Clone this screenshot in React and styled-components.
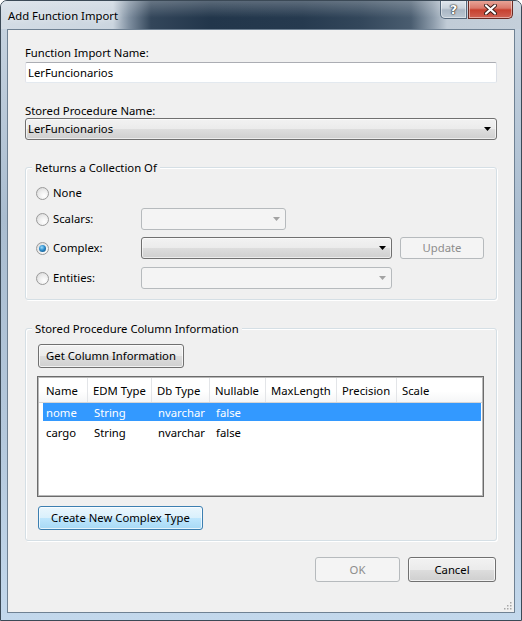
import React from "react";
import styled, { createGlobalStyle } from "styled-components";

const GlobalStyle = createGlobalStyle`
  html, body { margin: 0; padding: 0; background: #fff; }
  body {
    font-family: "Noto Sans", "Segoe UI", sans-serif;
    font-size: 11.3px;
    color: #000;
  }
`;

const Window = styled.div`
  width: 522px;
  height: 621px;
  box-sizing: border-box;
  border: 1px solid #3b4956;
  border-radius: 7px 7px 0 0;
  background: linear-gradient(180deg, #c9d5e1 0%, #aabdd0 35%, #b4c8dc 70%, #c3d8ec 100%);
  display: flex;
  flex-direction: column;
  overflow: hidden;
`;

const TitleBar = styled.div`
  height: 28px;
  flex: none;
  display: flex;
  justify-content: space-between;
  align-items: flex-start;
  padding: 0 8px 0 7px;
  background:
    linear-gradient(180deg, rgba(255, 255, 255, 0.25) 0%, rgba(255, 255, 255, 0) 60%),
    linear-gradient(90deg, #d3dce5 0px, #cbd5df 112px, #7f8fa0 128px, #33465a 150px, #22364b 210px,
      #263a4f 300px, #33475b 360px, #4a5d70 410px, #8d9cab 432px, #c1ccd7 446px, #c4cfda 100%);
`;

const Title = styled.span`
  line-height: 16px;
  margin-top: 7px;
  color: #000;
  text-shadow: 0 0 6px rgba(255, 255, 255, 0.9);
`;

const CaptionButtons = styled.div`
  display: flex;
  gap: 1px;
  margin-top: -1px;
`;

const CaptionButton = styled.div`
  height: 19px;
  width: ${(p) => (p.$close ? "45px" : "27px")};
  box-sizing: border-box;
  border: 1px solid ${(p) => (p.$close ? "#6b2a22" : "#55687b")};
  border-top: none;
  border-radius: ${(p) => (p.$close ? "0 0 5px 0" : "0 0 0 5px")};
  background: ${(p) =>
    p.$close
      ? "linear-gradient(180deg, #e9a99c 0%, #d9796b 45%, #c7402f 55%, #d06253 100%)"
      : "linear-gradient(180deg, #e3e9ef 0%, #c9d3dc 45%, #aab7c4 55%, #bcc8d3 100%)"};
  box-shadow: inset 0 0 0 1px rgba(255, 255, 255, 0.45);
  display: flex;
  align-items: center;
  justify-content: center;
`;

const HelpGlyph = styled.span`
  font-family: "DejaVu Sans", sans-serif;
  font-weight: bold;
  font-size: 13px;
  line-height: 13px;
  color: #fff;
  text-shadow: 0 0 1px #222, 0 0 1px #222, 0 0 2px #333;
`;

const Client = styled.div`
  position: relative;
  flex: none;
  margin: 0 6px;
  height: 584px;
  box-sizing: border-box;
  border: 1px solid #6f8193;
  background: #f0f0f0;
  padding: 14px 17px 0;
  display: flex;
  flex-direction: column;
`;

const FieldLabel = styled.div`
  line-height: 16px;
  height: 16px;
  padding-top: 1px;
  box-sizing: border-box;
  margin-top: ${(p) => p.$top || 0}px;
`;

const TextBox = styled.input`
  display: block;
  box-sizing: border-box;
  width: 100%;
  height: 21px;
  margin: 2px 0 0;
  padding: 0 2px;
  font: inherit;
  color: #000;
  background: #fff;
  border: 1px solid;
  border-color: #abadb3 #dbdfe6 #e3e9ef #e2e3ea;
  border-radius: 2px;
  outline: none;
`;

const Combo = styled.div`
  box-sizing: border-box;
  height: 22px;
  width: ${(p) => (p.$width ? `${p.$width}px` : "100%")};
  flex: none;
  border: 1px solid ${(p) => (p.$disabled ? "#b6babd" : "#707070")};
  border-radius: 3px;
  background: ${(p) =>
    p.$disabled
      ? "#f4f4f4"
      : "linear-gradient(180deg, #f2f2f2 0%, #ebebeb 50%, #dddddd 51%, #cfcfcf 100%)"};
  box-shadow: ${(p) => (p.$disabled ? "none" : "inset 0 0 0 1px rgba(255,255,255,0.6)")};
  display: flex;
  align-items: center;
  justify-content: space-between;
  padding: 0 5px 0 2px;
  line-height: 16px;
`;

const Arrow = ({ color }) => (
  <svg width="7" height="4" viewBox="0 0 7 4">
    <polygon points="0,0 7,0 3.5,4" fill={color} />
  </svg>
);

const GroupBox = styled.div`
  position: relative;
  box-sizing: border-box;
  margin-top: ${(p) => p.$top}px;
  border: 1px solid #d5dfe5;
  border-radius: 3px;
  box-shadow: inset 1px 1px 0 #fff, 1px 1px 0 #fff;
  padding: ${(p) => p.$pad};
  display: flex;
  flex-direction: column;
  align-items: flex-start;
`;

const Legend = styled.span`
  position: absolute;
  top: -8px;
  left: 6px;
  padding: 0 3px;
  line-height: 16px;
  background: #f0f0f0;
`;

const OptionRow = styled.div`
  display: flex;
  align-items: center;
  height: 22px;
  margin-top: ${(p) => p.$top || 0}px;
`;

const OptionLabel = styled.label`
  width: 105px;
  flex: none;
  display: flex;
  align-items: center;
  gap: 4px;
  line-height: 16px;
`;

const Radio = styled.span`
  width: 13px;
  height: 13px;
  box-sizing: border-box;
  border-radius: 50%;
  border: 1px solid #9a9a9a;
  background: radial-gradient(circle at 65% 70%, #ffffff 0%, #efefef 45%, #d3d3d3 100%);
  display: flex;
  align-items: center;
  justify-content: center;

  &::after {
    content: "";
    display: ${(p) => (p.$checked ? "block" : "none")};
    width: 7px;
    height: 7px;
    border-radius: 50%;
    background: radial-gradient(circle at 40% 35%, #9ddcf9 0%, #2d8ccc 45%, #0d456f 100%);
  }
`;

const Button = styled.div`
  box-sizing: border-box;
  height: ${(p) => p.$height || 24}px;
  width: ${(p) => p.$width}px;
  flex: none;
  margin-top: ${(p) => p.$top || 0}px;
  margin-left: ${(p) => p.$left || 0}px;
  border: 1px solid ${(p) => (p.$disabled ? "#b6babd" : p.$hot ? "#3c7fb1" : "#707070")};
  border-radius: 3px;
  background: ${(p) =>
    p.$disabled
      ? "#f4f4f4"
      : p.$hot
      ? "linear-gradient(180deg, #eaf6fd 0%, #d9f0fc 50%, #bee6fd 51%, #a7d9f5 100%)"
      : "linear-gradient(180deg, #f2f2f2 0%, #ebebeb 50%, #dddddd 51%, #cfcfcf 100%)"};
  box-shadow: ${(p) => (p.$disabled ? "none" : "inset 0 0 0 1px rgba(255,255,255,0.7)")};
  color: ${(p) => (p.$disabled ? "#8d8d8d" : "#000")};
  display: flex;
  align-items: center;
  justify-content: center;
  line-height: 16px;
`;

const ListView = styled.div`
  box-sizing: border-box;
  width: 447px;
  height: 121px;
  margin-top: 8px;
  border: 1px solid #6b6b6b;
  padding: 1px;
  background: #fff;
  box-shadow: inset 0 0 0 1px #b8b8b8;
`;

const headerCols = "49px 64px 58px 56px 71px 60px 50px 1fr";
const rowCols = "45px 64px 58px 56px 71px 60px 50px 1fr";

const HeaderRow = styled.div`
  display: grid;
  grid-template-columns: ${headerCols};
  height: 24px;
  border-bottom: 1px solid #d5d5d5;
  background: linear-gradient(180deg, #ffffff 0%, #ffffff 55%, #f5f6f7 100%);
`;

const HeaderCell = styled.div`
  display: flex;
  align-items: center;
  padding: 1px 0 0 5px;
  border-right: 1px solid ${(p) => (p.$last ? "transparent" : "#e3e5e8")};
  line-height: 16px;
  white-space: nowrap;
  &:first-child { padding-left: 7px; }
`;

const DataRow = styled.div`
  display: grid;
  grid-template-columns: ${rowCols};
  height: 18px;
  margin: 0 1px 2px 4px;
  background: ${(p) => (p.$selected ? "#3399ff" : "transparent")};
  color: ${(p) => (p.$selected ? "#fff" : "#000")};
`;

const DataCell = styled.div`
  display: flex;
  align-items: center;
  padding: 1px 0 0 6px;
  line-height: 16px;
  white-space: nowrap;
  &:first-child { padding-left: 3px; }
`;

const Footer = styled.div`
  display: flex;
  justify-content: flex-end;
  gap: 8px;
  margin-top: 16px;
  padding-right: 1px;
`;

const Grip = styled.svg`
  position: absolute;
  right: 2px;
  bottom: 2px;
`;

const columns = ["Name", "EDM Type", "Db Type", "Nullable", "MaxLength", "Precision", "Scale"];
const rows = [
  { name: "nome", edm: "String", db: "nvarchar", nullable: "false", selected: true },
  { name: "cargo", edm: "String", db: "nvarchar", nullable: "false" },
];

export default function App() {
  return (
    <>
      <GlobalStyle />
      <Window>
        <TitleBar>
          <Title>Add Function Import</Title>
          <CaptionButtons>
            <CaptionButton>
              <HelpGlyph>?</HelpGlyph>
            </CaptionButton>
            <CaptionButton $close>
              <svg width="13" height="11" viewBox="0 0 13 11">
                <path d="M2 1.5 L11 9.5 M11 1.5 L2 9.5" stroke="#3a1d18" strokeWidth="4" strokeLinecap="round" />
                <path d="M2 1.5 L11 9.5 M11 1.5 L2 9.5" stroke="#fff" strokeWidth="2.2" strokeLinecap="round" />
              </svg>
            </CaptionButton>
          </CaptionButtons>
        </TitleBar>

        <Client>
          <FieldLabel>Function Import Name:</FieldLabel>
          <TextBox readOnly defaultValue="LerFuncionarios" />

          <FieldLabel $top={19}>Stored Procedure Name:</FieldLabel>
          <Combo>
            <span>LerFuncionarios</span>
            <Arrow color="#000" />
          </Combo>

          <GroupBox $top={27} $pad="14px 10px 10px">
            <Legend>Returns a Collection Of</Legend>
            <OptionRow>
              <OptionLabel>
                <Radio />
                None
              </OptionLabel>
            </OptionRow>
            <OptionRow $top={4}>
              <OptionLabel>
                <Radio />
                Scalars:
              </OptionLabel>
              <Combo $disabled $width={145}>
                <span />
                <Arrow color="#a3a3a3" />
              </Combo>
            </OptionRow>
            <OptionRow $top={7}>
              <OptionLabel>
                <Radio $checked />
                Complex:
              </OptionLabel>
              <Combo $width={251}>
                <span />
                <Arrow color="#000" />
              </Combo>
              <Button $disabled $width={84} $height={22} $left={8}>
                Update
              </Button>
            </OptionRow>
            <OptionRow $top={8}>
              <OptionLabel>
                <Radio />
                Entities:
              </OptionLabel>
              <Combo $disabled $width={251}>
                <span />
                <Arrow color="#a3a3a3" />
              </Combo>
            </OptionRow>
          </GroupBox>

          <GroupBox $top={28} $pad="15px 11px 10px">
            <Legend>Stored Procedure Column Information</Legend>
            <Button $width={146} $left={1}>
              Get Column Information
            </Button>
            <ListView>
              <HeaderRow>
                {columns.map((c, i) => (
                  <HeaderCell key={c} $last={i === columns.length - 1}>
                    {c}
                  </HeaderCell>
                ))}
                <HeaderCell $last />
              </HeaderRow>
              {rows.map((r) => (
                <DataRow key={r.name} $selected={r.selected}>
                  <DataCell>{r.name}</DataCell>
                  <DataCell>{r.edm}</DataCell>
                  <DataCell>{r.db}</DataCell>
                  <DataCell>{r.nullable}</DataCell>
                </DataRow>
              ))}
            </ListView>
            <Button $hot $width={165} $top={9} $left={1}>
              Create New Complex Type
            </Button>
          </GroupBox>

          <Footer>
            <Button $disabled $width={85} $height={25}>
              OK
            </Button>
            <Button $width={88} $height={25}>
              Cancel
            </Button>
          </Footer>

          <Grip width="10" height="10" viewBox="0 0 10 10">
            {[
              [8, 2],
              [5, 5],
              [8, 5],
              [2, 8],
              [5, 8],
              [8, 8],
            ].map(([x, y]) => (
              <rect key={`${x}-${y}`} x={x} y={y} width="1.5" height="1.5" fill="#a7a7a7" />
            ))}
          </Grip>
        </Client>
      </Window>
    </>
  );
}
